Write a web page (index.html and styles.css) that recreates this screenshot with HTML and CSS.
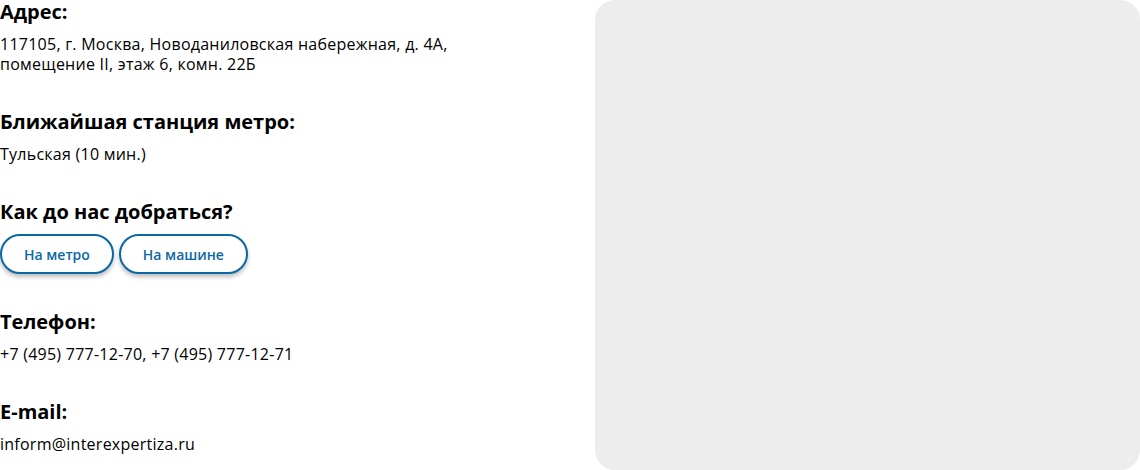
FILE: index.html
```html
<!DOCTYPE html>
<html lang="ru">
<head>
<meta charset="utf-8">
<title>Контакты</title>
<link rel="stylesheet" href="styles.css">
</head>
<body>
<div class="contacts">
  <div class="info">
    <section class="block">
      <h3 class="title">Адрес:</h3>
      <p class="text">117105, г. Москва, Новоданиловская набережная, д. 4А,<br>помещение II, этаж 6, комн. 22Б</p>
    </section>
    <section class="block">
      <h3 class="title">Ближайшая станция метро:</h3>
      <p class="text">Тульская (10 мин.)</p>
    </section>
    <section class="block">
      <h3 class="title">Как до нас добраться?</h3>
      <div class="buttons">
        <button class="btn">На метро</button>
        <button class="btn">На машине</button>
      </div>
    </section>
    <section class="block">
      <h3 class="title">Телефон:</h3>
      <p class="text">+7 (495) 777-12-70, +7 (495) 777-12-71</p>
    </section>
    <section class="block">
      <h3 class="title">E-mail:</h3>
      <p class="text">inform@interexpertiza.ru</p>
    </section>
  </div>
  <div class="map"></div>
</div>
</body>
</html>
```
FILE: styles.css
```css
html, body {
  margin: 0;
  padding: 0;
  background: #fff;
}
body {
  font-family: "Open Sans", "Liberation Sans", sans-serif;
  color: #000;
}
.contacts {
  display: flex;
  width: 1140px;
  height: 470px;
}
.info {
  width: 595px;
  display: flex;
  flex-direction: column;
  gap: 36px;
}
.block {
  display: flex;
  flex-direction: column;
  gap: 10px;
}
.title {
  margin: 0;
  font-size: 20px;
  line-height: 24px;
  font-weight: 700;
}
.text {
  margin: 0;
  font-size: 16px;
  line-height: 20px;
  font-weight: 400;
  letter-spacing: 0.25px;
}
.buttons {
  display: flex;
  gap: 5px;
}
.btn {
  height: 40px;
  padding: 0 22px;
  border: 2px solid #0b67a3;
  border-radius: 20px;
  background: #fff;
  color: #0b67a3;
  font-family: inherit;
  font-size: 14px;
  font-weight: 600;
  box-shadow: 0 3px 4px rgba(0, 0, 0, 0.25);
  cursor: pointer;
}
.map {
  flex: 1;
  background: #ededed;
  border-radius: 20px;
}
```
